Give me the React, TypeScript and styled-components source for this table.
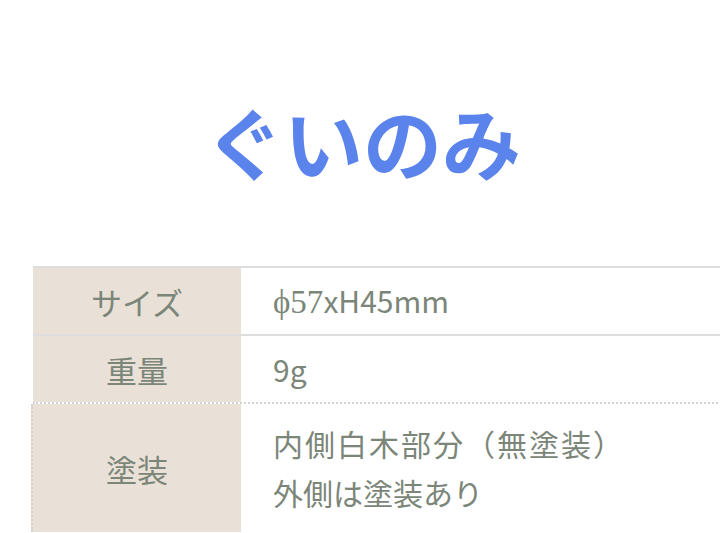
import React from 'react';
import styled, { createGlobalStyle } from 'styled-components';

const GlobalStyle = createGlobalStyle`
  html, body {
    margin: 0;
    padding: 0;
    background: #fff;
    overflow: hidden;
  }
  body {
    font-family: 'Noto Sans CJK JP', 'Noto Sans', sans-serif;
  }
`;

const Page = styled.div`
  width: 720px;
  height: 533px;
  padding: 84px 0 0 33px;
  box-sizing: border-box;
  overflow: hidden;
`;

const Title = styled.h1`
  width: 660px;
  margin: 0 0 68px;
  text-align: center;
  font-size: 79px;
  line-height: 114px;
  font-weight: 700;
  color: #5b83ec;
`;

const Table = styled.div`
  width: 720px;
  display: flex;
  flex-direction: column;
`;

const Row = styled.div<{ $border: 'solid' | 'dotted' }>`
  display: grid;
  grid-template-columns: 208px 1fr;
  border-top: 2px ${(p) => p.$border} ${(p) => (p.$border === 'solid' ? '#dedede' : '#d4d4d4')};
`;

const Label = styled.div<{ $dotted?: boolean }>`
  background: #e9e1d8;
  display: flex;
  align-items: center;
  justify-content: center;
  font-size: 31px;
  color: #7b8679;
  border-left: ${(p) => (p.$dotted ? '2px dotted #d6d0c8' : 'none')};
  margin-left: ${(p) => (p.$dotted ? '-2px' : '0')};
`;

const Value = styled.div<{ $tall?: boolean }>`
  padding: ${(p) => (p.$tall ? '15px 0 15px 32px' : '0 0 0 32px')};
  height: ${(p) => (p.$tall ? 'auto' : '66px')};
  display: flex;
  flex-direction: column;
  justify-content: center;
  font-size: 30px;
  line-height: 49px;
  color: #7b8679;
  white-space: nowrap;
`;

const Line = styled.span<{ $wide?: boolean }>`
  letter-spacing: ${(p) => (p.$wide ? '2px' : '0')};
`;

const Serif = styled.span`
  font-family: 'Liberation Serif', 'DejaVu Serif', serif;
  font-size: 33px;
`;

const App: React.FC = () => {
  return (
    <Page>
      <GlobalStyle />
      <Title>ぐいのみ</Title>
      <Table>
        <Row $border="solid">
          <Label>サイズ</Label>
          <Value>
            <span>
              <Serif>ϕ57</Serif>xH45mm
            </span>
          </Value>
        </Row>
        <Row $border="solid">
          <Label>重量</Label>
          <Value>9g</Value>
        </Row>
        <Row $border="dotted">
          <Label $dotted>塗装</Label>
          <Value $tall>
            <Line $wide>内側白木部分（無塗装）</Line>
            <Line>外側は塗装あり</Line>
          </Value>
        </Row>
      </Table>
    </Page>
  );
};

export default App;
